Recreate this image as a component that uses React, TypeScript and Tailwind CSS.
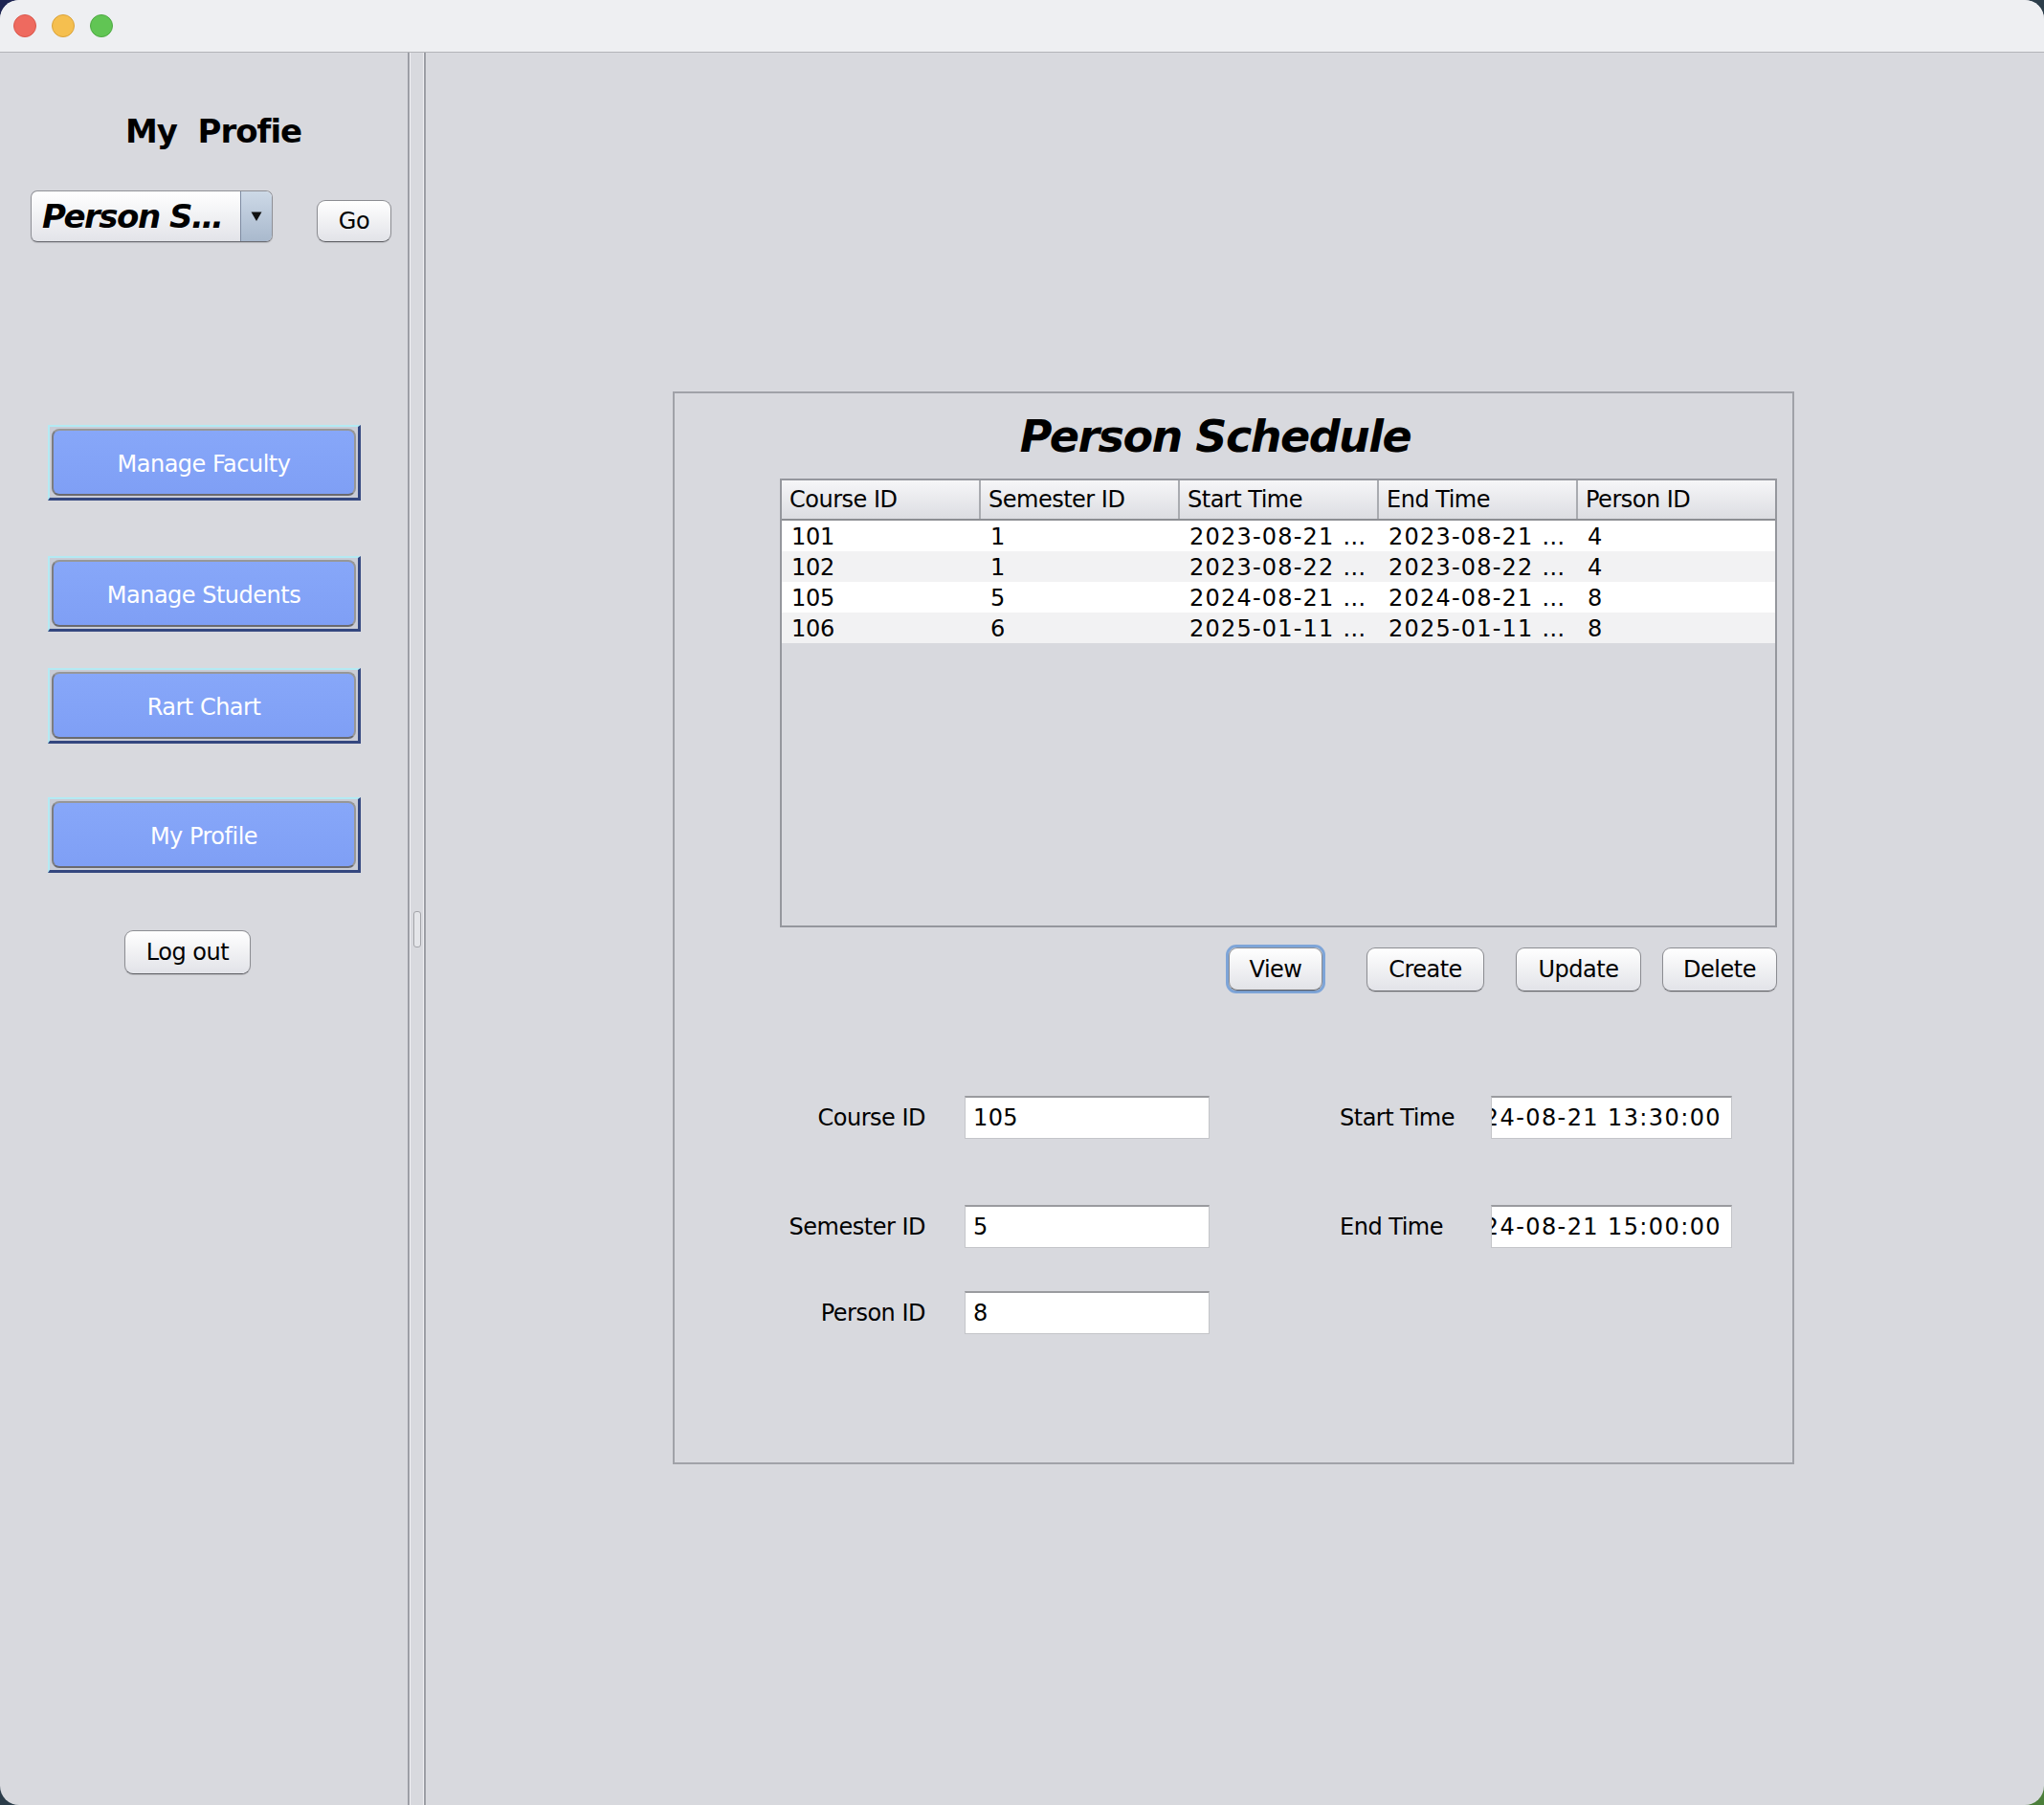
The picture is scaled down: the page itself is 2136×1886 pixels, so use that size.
import React from "react";

// Swing-on-macOS style admin window: sidebar nav + "Person Schedule" editor.

const FONT = { fontFamily: '"DejaVu Sans", "Liberation Sans", sans-serif' };

const AQUA_BTN =
  "flex items-center justify-center rounded-[9px] border border-[#8c8d92] border-b-[#5e5f64] bg-gradient-to-b from-white to-[#e2e3e8] text-[24px] tracking-[-0.5px] text-black shadow-[0_1px_1px_rgba(0,0,0,0.12)]";

const FIELD =
  "h-[45px] overflow-hidden border border-[#c4c5c9] border-t-2 border-t-[#9a9b9f] bg-white flex items-center text-[24px] text-black";

const NAV_ITEMS = ["Manage Faculty", "Manage Students", "Rart Chart", "My Profile"];
const NAV_GAPS = ["mt-[191px]", "mt-[58px]", "mt-[38px]", "mt-[56px]"];

const COLUMNS = ["Course ID", "Semester ID", "Start Time", "End Time", "Person ID"];

const ROWS = [
  ["101", "1", "2023-08-21 …", "2023-08-21 …", "4"],
  ["102", "1", "2023-08-22 …", "2023-08-22 …", "4"],
  ["105", "5", "2024-08-21 …", "2024-08-21 …", "8"],
  ["106", "6", "2025-01-11 …", "2025-01-11 …", "8"],
];

function TitleBar() {
  return (
    <div className="flex h-[55px] items-center gap-[16px] border-b border-[#b3b4b8] bg-[#eeeff2] pl-[14px]">
      <span className="h-[24px] w-[24px] rounded-full border border-[#d9574c] bg-[#ee6a5f]" />
      <span className="h-[24px] w-[24px] rounded-full border border-[#d9a23a] bg-[#f5bf4f]" />
      <span className="h-[24px] w-[24px] rounded-full border border-[#4ea843] bg-[#61c554]" />
    </div>
  );
}

function NavButton({ label, gap }: { label: string; gap: string }) {
  return (
    <div
      className={`${gap} ml-[50px] h-[79px] w-[327px] border-l-2 border-t-2 border-b-[3px] border-r-[3px] border-l-[#b4eaf3] border-t-[#b4eaf3] border-b-[#34477f] border-r-[#34477f] bg-[#c9ccd6] p-[2px]`}
    >
      <div className="flex h-full w-full items-center justify-center rounded-[8px] border-2 border-[#979797] border-b-[#6a6a6e] border-l-[#7d7d80] bg-gradient-to-b from-[#87a7f9] to-[#7f9ff5] pt-[3px] text-[24px] tracking-[-0.5px] text-white">
        {label}
      </div>
    </div>
  );
}

function Sidebar() {
  return (
    <div className="flex w-[426px] flex-col">
      <div className="mt-[64px] pl-[20px] text-center text-[34px] font-bold leading-[36px] tracking-[-1px] whitespace-pre text-black">
        {"My  Profie"}
      </div>
      <div className="mt-[44px] flex items-end pl-[32px]">
        <div className="flex h-[54px] w-[253px] overflow-hidden rounded-[7px] border border-[#8f9096] border-b-[#6b6c72] bg-gradient-to-b from-white to-[#e3e4e9] shadow-[0_1px_1px_rgba(0,0,0,0.15)]">
          <div className="flex flex-1 items-center pl-[11px] text-[34px] font-bold italic tracking-[-1.5px] text-black whitespace-nowrap">
            Person S…
          </div>
          <div className="flex w-[33px] items-center justify-center border-l border-[#7d8ba2] bg-gradient-to-b from-[#cdd9e7] to-[#a9b9cd]">
            <svg width="12" height="12" viewBox="0 0 12 12">
              <path d="M0.5 1.5 L11.5 1.5 L6 11 Z" fill="#111" />
            </svg>
          </div>
        </div>
        <button className={`${AQUA_BTN} ml-[46px] h-[44px] w-[78px]`}>Go</button>
      </div>
      {NAV_ITEMS.map((label, i) => (
        <NavButton key={label} label={label} gap={NAV_GAPS[i]} />
      ))}
      <button className={`${AQUA_BTN} ml-[130px] mt-[60px] h-[46px] w-[132px]`}>Log out</button>
    </div>
  );
}

function Divider() {
  return (
    <div className="flex w-[19px]">
      <div className="w-[2px] bg-[#9c9ea5]" />
      <div className="w-[1px] bg-[#f1f1f4]" />
      <div className="flex flex-1 items-center justify-center">
        <div className="h-[38px] w-[8px] rounded-[3px] border border-[#a3a4a9] bg-[#e4e5e9]" />
      </div>
      <div className="w-[1px] bg-[#f1f1f4]" />
      <div className="w-[2px] bg-[#9c9ea5]" />
    </div>
  );
}

function ScheduleTable() {
  return (
    <div className="ml-[110px] mt-[21px] h-[469px] w-[1042px] border-2 border-[#95979d] bg-[#d8d9de]">
      <div className="flex h-[42px] border-b-2 border-[#8c8e93] bg-gradient-to-b from-[#f6f6f8] to-[#dcdde2]">
        {COLUMNS.map((c, i) => (
          <div
            key={c}
            className={`flex w-[208px] items-center pl-[8px] text-[24px] tracking-[-0.5px] text-black ${
              i < COLUMNS.length - 1 ? "border-r-2 border-[#a9abb0]" : "flex-1"
            }`}
          >
            {c}
          </div>
        ))}
      </div>
      {ROWS.map((row, r) => (
        <div key={r} className={`flex h-[32px] ${r % 2 === 0 ? "bg-white" : "bg-[#f2f2f3]"}`}>
          {row.map((cell, i) => (
            <div
              key={i}
              className={`flex w-[208px] items-center pl-[10px] pt-[2px] text-[24px] text-black whitespace-nowrap overflow-hidden ${
                i === 2 || i === 3 ? "tracking-[1.2px]" : "tracking-[-0.3px]"
              } ${i === 4 ? "flex-1" : ""}`}
            >
              {cell}
            </div>
          ))}
        </div>
      ))}
    </div>
  );
}

function Label({ text, className }: { text: string; className: string }) {
  return (
    <div className={`text-[24px] tracking-[-0.5px] text-black whitespace-nowrap ${className}`}>{text}</div>
  );
}

function Field({ value, width, clipLeft }: { value: string; width: string; clipLeft?: boolean }) {
  return (
    <div className={`${FIELD} ${width} ${clipLeft ? "justify-end pr-[10px]" : "pl-[8px]"}`}>
      <span className={`whitespace-nowrap ${clipLeft ? "tracking-[1.4px]" : "tracking-[0.4px]"}`}>{value}</span>
    </div>
  );
}

function ScheduleForm() {
  return (
    <div className="ml-[100px] flex flex-col">
      <div className="mt-[107px] flex items-center">
        <Label text="Course ID" className="w-[162px] text-right" />
        <div className="ml-[41px]">
          <Field value="105" width="w-[256px]" />
        </div>
        <Label text="Start Time" className="ml-[136px] w-[158px]" />
        <Field value="2024-08-21 13:30:00" width="w-[252px]" clipLeft />
      </div>
      <div className="mt-[69px] flex items-center">
        <Label text="Semester ID" className="w-[162px] text-right" />
        <div className="ml-[41px]">
          <Field value="5" width="w-[256px]" />
        </div>
        <Label text="End Time" className="ml-[136px] w-[158px]" />
        <Field value="2024-08-21 15:00:00" width="w-[252px]" clipLeft />
      </div>
      <div className="mt-[45px] flex items-center">
        <Label text="Person ID" className="w-[162px] text-right" />
        <div className="ml-[41px]">
          <Field value="8" width="w-[256px]" />
        </div>
      </div>
    </div>
  );
}

function SchedulePanel() {
  return (
    <div className="ml-[258px] mt-[354px] flex h-[1121px] w-[1172px] flex-col border-2 border-[#a0a2a8]">
      <div className="mt-[22px] flex justify-center pr-[38px] text-[46px] font-bold italic leading-[46px] tracking-[-1.5px] text-black">
        Person Schedule
      </div>
      <ScheduleTable />
      <div className="mt-[18px] flex items-center">
        <div className="ml-[576px] rounded-[11px] border-[3px] border-[#7ea5d8] p-0">
          <button className={`${AQUA_BTN} h-[45px] w-[98px]`}>View</button>
        </div>
        <button className={`${AQUA_BTN} ml-[43px] h-[46px] w-[123px]`}>Create</button>
        <button className={`${AQUA_BTN} ml-[33px] h-[46px] w-[131px]`}>Update</button>
        <button className={`${AQUA_BTN} ml-[22px] h-[46px] w-[120px]`}>Delete</button>
      </div>
      <ScheduleForm />
    </div>
  );
}

export default function App() {
  return (
    <div className="h-[1886px] w-[2136px] bg-gradient-to-br from-[#1d2452] via-[#2c3d4a] to-[#4b7f3a]" style={FONT}>
      <div className="flex h-full w-full flex-col overflow-hidden rounded-[20px] bg-[#d8d9de]">
        <TitleBar />
        <div className="flex flex-1">
          <Sidebar />
          <Divider />
          <div className="flex-1">
            <SchedulePanel />
          </div>
        </div>
      </div>
    </div>
  );
}
